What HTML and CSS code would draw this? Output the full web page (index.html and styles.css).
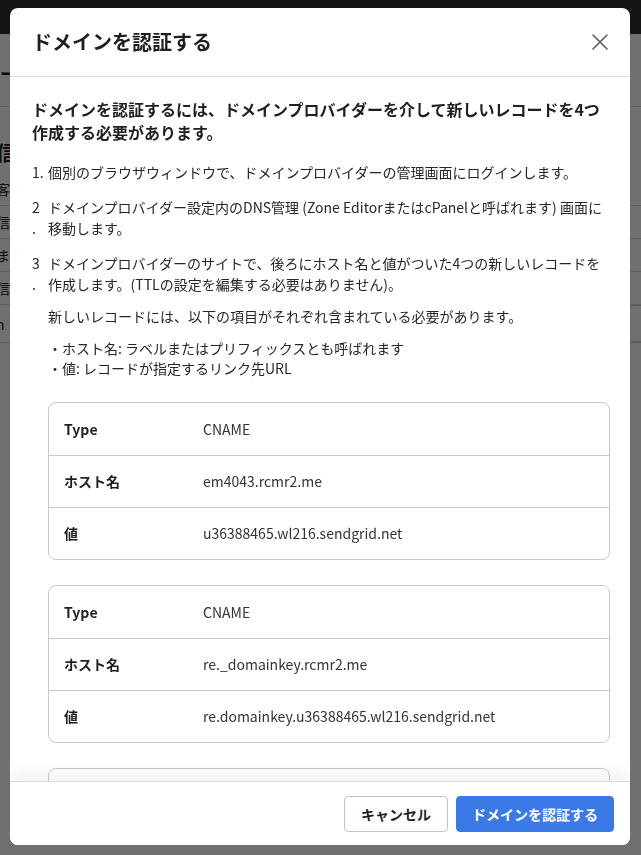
FILE: index.html
```html
<!DOCTYPE html>
<html lang="ja">
<head>
<meta charset="utf-8">
<title>ドメイン認証</title>
<link rel="stylesheet" href="styles.css">
</head>
<body>
  <div class="page">
    <header class="topbar"></header>
    <div class="subbar"><span class="subbar-title">メンバー</span></div>
    <main class="content">
      <h2 class="section-title">信</h2>
      <div class="form-row"><span>客</span></div>
      <div class="form-row"><span>信</span></div>
      <div class="form-row"><span>ま</span></div>
      <div class="form-row"><span>信</span></div>
      <div class="form-row form-row-tall"><span>n</span><span class="field"></span></div>
    </main>
  </div>

  <div class="overlay"></div>

  <div class="modal" role="dialog" aria-labelledby="modal-title">
    <div class="modal-header">
      <h1 class="modal-title" id="modal-title">ドメインを認証する</h1>
      <button class="close-btn" aria-label="閉じる">
        <svg width="16" height="16" viewBox="0 0 16 16"><path d="M1 1 L15 15 M15 1 L1 15" stroke="#5b5b5b" stroke-width="1.6" fill="none" stroke-linecap="round"/></svg>
      </button>
    </div>

    <div class="modal-body">
      <p class="lead">ドメインを認証するには、ドメインプロバイダーを介して新しいレコードを4つ作成する必要があります。</p>

      <ol class="steps">
        <li class="step">
          <span class="step-num">1.</span>
          <div class="step-text">個別のブラウザウィンドウで、ドメインプロバイダーの管理画面にログインします。</div>
        </li>
        <li class="step">
          <span class="step-num">2<br>.</span>
          <div class="step-text">ドメインプロバイダー設定内のDNS管理 (Zone EditorまたはcPanelと呼ばれます) 画面に移動します。</div>
        </li>
        <li class="step">
          <span class="step-num">3<br>.</span>
          <div class="step-text">
            ドメインプロバイダーのサイトで、後ろにホスト名と値がついた4つの新しいレコードを作成します。(TTLの設定を編集する必要はありません)。
            <p class="note">新しいレコードには、以下の項目がそれぞれ含まれている必要があります。</p>
            <ul class="bullets">
              <li>・ホスト名: ラベルまたはプリフィックスとも呼ばれます</li>
              <li>・値: レコードが指定するリンク先URL</li>
            </ul>

            <div class="record">
              <div class="record-row"><span class="record-label">Type</span><span class="record-value">CNAME</span></div>
              <div class="record-row"><span class="record-label">ホスト名</span><span class="record-value">em4043.rcmr2.me</span></div>
              <div class="record-row"><span class="record-label">値</span><span class="record-value">u36388465.wl216.sendgrid.net</span></div>
            </div>

            <div class="record">
              <div class="record-row"><span class="record-label">Type</span><span class="record-value">CNAME</span></div>
              <div class="record-row"><span class="record-label">ホスト名</span><span class="record-value">re._domainkey.rcmr2.me</span></div>
              <div class="record-row"><span class="record-label">値</span><span class="record-value">re.domainkey.u36388465.wl216.sendgrid.net</span></div>
            </div>

            <div class="record">
              <div class="record-row"><span class="record-label">Type</span><span class="record-value">CNAME</span></div>
              <div class="record-row"><span class="record-label">ホスト名</span><span class="record-value">re2._domainkey.rcmr2.me</span></div>
              <div class="record-row"><span class="record-label">値</span><span class="record-value">re2.domainkey.u36388465.wl216.sendgrid.net</span></div>
            </div>
          </div>
        </li>
      </ol>
    </div>

    <div class="modal-footer">
      <button class="btn btn-secondary">キャンセル</button>
      <button class="btn btn-primary">ドメインを認証する</button>
    </div>
  </div>
</body>
</html>
```

FILE: styles.css
```css
* {
  box-sizing: border-box;
}

html,
body {
  margin: 0;
  height: 100%;
}

body {
  font-family: "Noto Sans CJK JP", "Noto Sans", sans-serif;
  color: #1f1f1f;
  background: #ffffff;
  overflow: hidden;
}

/* ---- page underneath the dialog ---- */
.topbar {
  height: 34px;
  background: #2b2e33;
}

.subbar {
  height: 73px;
  display: flex;
  align-items: center;
  border-bottom: 1px solid #d4d4d4;
  background: #ffffff;
}

.subbar-title {
  font-size: 18px;
  font-weight: 700;
  margin-left: -54px;
  padding-top: 6px;
}

.content {
  margin-left: -4px;
}

.section-title {
  margin: 32px 0 6px;
  font-size: 20px;
  line-height: 28px;
  font-weight: 700;
}

.form-row {
  height: 33px;
  display: flex;
  align-items: center;
  justify-content: space-between;
  border-bottom: 1px solid #d4d4d4;
  font-size: 14px;
}

.form-row-tall {
  height: 38px;
}

.field {
  width: 40px;
  height: 37px;
  margin-right: -28px;
  border: 1px solid #cfcfcf;
  border-radius: 4px;
  background: #ffffff;
}

.overlay {
  position: fixed;
  inset: 0;
  background: rgba(0, 0, 0, 0.56);
}

/* ---- dialog ---- */
.modal {
  position: fixed;
  left: 10px;
  top: 8px;
  width: 620px;
  height: 837px;
  display: flex;
  flex-direction: column;
  background: #ffffff;
  border-radius: 8px;
  overflow: hidden;
}

.modal-header {
  flex: none;
  height: 69px;
  padding: 0 22px;
  display: flex;
  align-items: center;
  justify-content: space-between;
  border-bottom: 1px solid #dcdcdc;
}

.modal-title {
  margin: 0;
  font-size: 20px;
  line-height: 28px;
  font-weight: 700;
  color: #1f1f1f;
}

.close-btn {
  width: 16px;
  height: 16px;
  padding: 0;
  border: 0;
  background: none;
  display: flex;
  cursor: pointer;
}

.modal-body {
  flex: 1;
  overflow: hidden;
  padding: 21px 20px 0 22px;
}

.lead {
  margin: 0 0 18px;
  font-size: 16px;
  line-height: 23px;
  font-weight: 700;
  color: #1f1f1f;
}

.steps {
  list-style: none;
  margin: 0;
  padding: 0;
}

.step {
  display: grid;
  grid-template-columns: 16px 1fr;
  font-size: 14px;
  line-height: 21px;
  color: #262626;
  margin-bottom: 14px;
}

.step-num {
  display: block;
}

.note {
  margin: 11px 0 0;
}

.bullets {
  list-style: none;
  margin: 11px 0 0;
  padding: 0;
  line-height: 20px;
}

.record {
  margin-top: 24px;
  border: 1px solid #c9c9c9;
  border-radius: 8px;
}

.record + .record {
  margin-top: 25px;
}

.record-row {
  height: 52px;
  display: grid;
  grid-template-columns: 139px 1fr;
  align-items: center;
  padding: 0 15px;
  font-size: 14px;
}

.record-row + .record-row {
  border-top: 1px solid #c9c9c9;
}

.record-label {
  font-weight: 700;
  color: #1f1f1f;
}

.record-value {
  color: #333333;
}

.modal-footer {
  flex: none;
  position: relative;
  z-index: 1;
  height: 64px;
  padding: 1px 16px 0;
  display: flex;
  align-items: center;
  justify-content: flex-end;
  gap: 8px;
  border-top: 1px solid #dedede;
  background: #ffffff;
  box-shadow: 0 -8px 16px rgba(0, 0, 0, 0.05);
}

.btn {
  height: 36px;
  padding: 0 16px;
  border-radius: 4px;
  font-family: inherit;
  font-size: 14px;
  font-weight: 700;
  cursor: pointer;
}

.btn-secondary {
  background: #ffffff;
  border: 1px solid #c4c4c4;
  color: #1f1f1f;
}

.btn-primary {
  padding: 0 15px;
  background: #3a79e6;
  border: 1px solid #3a79e6;
  color: #ffffff;
}
```
